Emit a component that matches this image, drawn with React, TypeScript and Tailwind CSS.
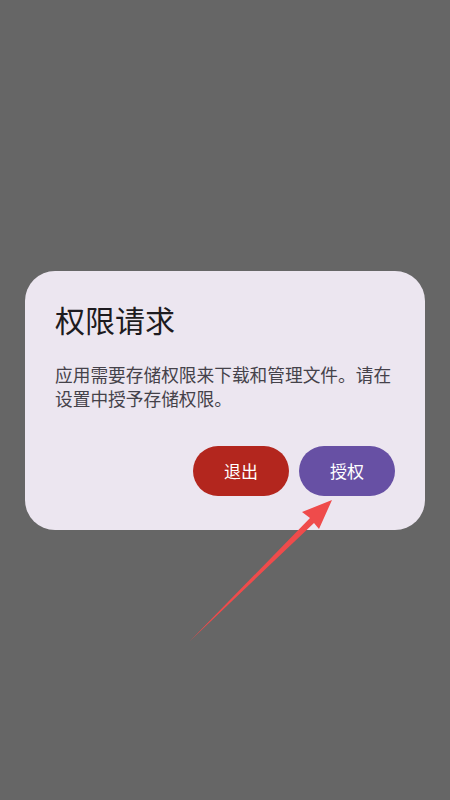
export default function App() {
  return (
    <div
      className="relative h-[800px] w-[450px] overflow-hidden bg-[#666666]"
      style={{ fontFamily: '"Noto Sans CJK SC", "Noto Sans", sans-serif' }}
    >
      <div className="flex h-full items-center justify-center px-[25px]">
        <div className="w-full rounded-[30px] bg-[#ece6f0] px-[30px] pb-[34px] pt-[30px]">
          <h2 className="text-[30px] leading-[36px] text-[#1d1b20]">权限请求</h2>
          <p className="mt-[25px] text-[17.7px] leading-[24px] text-[#45424a]">
            应用需要存储权限来下载和管理文件。请在设置中授予存储权限。
          </p>
          <div className="mt-[36px] flex justify-end gap-[10px]">
            <button className="h-[50px] w-[96px] rounded-full bg-[#b3261e] text-[17px] text-white">
              退出
            </button>
            <button className="h-[50px] w-[96px] rounded-full bg-[#6750a4] text-[17px] text-white">
              授权
            </button>
          </div>
        </div>
      </div>

      {/* annotation arrow */}
      <svg className="pointer-events-none absolute left-0 top-0" width="450" height="800">
        <polygon
          points="190,641 310,518 302,512 332,500 319,529 314,523"
          fill="#ef4b4b"
        />
      </svg>
    </div>
  );
}
